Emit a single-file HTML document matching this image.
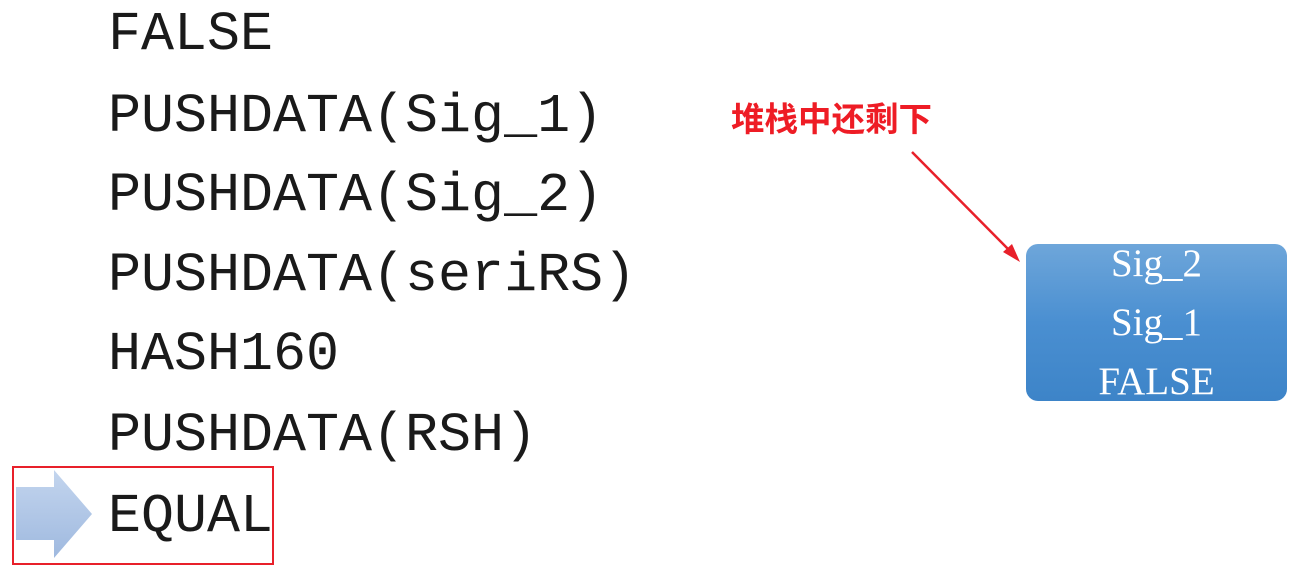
<!DOCTYPE html>
<html><head><meta charset="utf-8"><style>
html,body{margin:0;padding:0;background:#fff;width:1307px;height:580px;overflow:hidden;position:relative}
.code{position:absolute;left:108px;font-family:"Liberation Mono",monospace;font-size:55px;line-height:1;color:#1a1a1a;white-space:pre}
.lbl{position:absolute;left:731px;top:103px;font-family:"Liberation Sans","Noto Sans CJK SC",sans-serif;font-weight:bold;font-size:33.5px;color:#ee1c25;white-space:nowrap;line-height:1.1}
.box{position:absolute;left:1026px;top:244px;width:261px;height:157px;border-radius:12px;background:linear-gradient(#6ea6da,#4a8fd1 50%,#3d84c8);}
.box div{position:absolute;width:100%;text-align:center;font-family:"Liberation Serif",serif;font-size:39px;color:#fff;line-height:1}
.red{position:absolute;left:12px;top:466px;width:258px;height:95px;border:2px solid #e8202a}
</style></head><body>
<div class="code" style="top:7px">FALSE</div>
<div class="code" style="top:89px">PUSHDATA(Sig_1)</div>
<div class="code" style="top:168px">PUSHDATA(Sig_2)</div>
<div class="code" style="top:248px">PUSHDATA(seriRS)</div>
<div class="code" style="top:327px">HASH160</div>
<div class="code" style="top:408px">PUSHDATA(RSH)</div>
<div class="code" style="top:489px">EQUAL</div>
<div class="lbl">堆栈中还剩下</div>
<svg style="position:absolute;left:0;top:0" width="1307" height="580">
<defs><linearGradient id="g" x1="0" y1="0" x2="0" y2="1"><stop offset="0" stop-color="#c3d5ee"/><stop offset="1" stop-color="#9fb9df"/></linearGradient></defs>
<line x1="912" y1="152" x2="1012" y2="253" stroke="#e8202a" stroke-width="2.5"/>
<polygon points="1020,262 1003,252 1012,244" fill="#e8202a"/>
<polygon points="16,487 54,487 54,470 92,514 54,558 54,540 16,540" fill="url(#g)"/>
</svg>
<div class="red"></div>
<div class="box">
<div style="top:0px">Sig_2</div>
<div style="top:59px">Sig_1</div>
<div style="top:118px">FALSE</div>
</div>
</body></html>
